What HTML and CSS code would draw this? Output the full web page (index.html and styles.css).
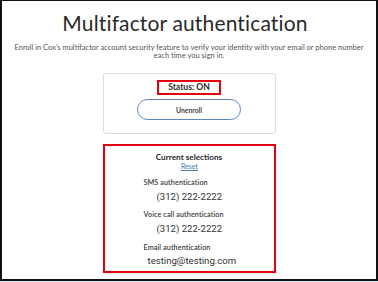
FILE: index.html
```html
<!DOCTYPE html>
<html>
<head>
<meta charset="utf-8">
<link rel="stylesheet" href="styles.css">
</head>
<body>
<div class="frame">
  <h1 class="title">Multifactor authentication</h1>
  <p class="intro">Enroll in Cox's multifactor account security feature to verify your identity with your email or phone number<br>each time you sign in.</p>
  <div class="card status-card">
    <div class="status">Status: ON</div>
    <button class="btn">Unenroll</button>
  </div>
  <div class="card selections">
    <div class="sel-title">Current selections</div>
    <a class="reset" href="#">Reset</a>
    <div class="group">
      <div class="label">SMS authentication</div>
      <div class="value phone">(312) 222-2222</div>
    </div>
    <div class="group">
      <div class="label">Voice call authentication</div>
      <div class="value phone">(312) 222-2222</div>
    </div>
    <div class="group last">
      <div class="label">Email authentication</div>
      <div class="value email">testing@testing.com</div>
    </div>
  </div>
</div>
</body>
</html>
```
FILE: styles.css
```css
html, body {
  margin: 0;
  padding: 0;
  background: #ffffff;
}
body {
  width: 378px;
  height: 282px;
  overflow: hidden;
  font-family: Lato, "Open Sans", sans-serif;
  color: #333;
}
.frame {
  box-sizing: border-box;
  width: 378px;
  height: 281px;
  border-top: 1px solid #111;
  border-left: 2px solid #111;
  border-right: 2px solid #111;
  border-bottom: 2px solid #111;
  box-shadow: 0 1px 0 #d4ecec;
  display: flex;
  flex-direction: column;
  align-items: center;
  padding-top: 9px;
}
.title {
  margin: 0 8px 0 0;
  font-weight: 400;
  font-size: 21px;
  line-height: 25px;
  color: #2a2a2a;
  letter-spacing: 0.15px;
}
.intro {
  margin: 9px 0 0;
  font-size: 7.5px;
  line-height: 7.5px;
  color: #555;
  text-align: center;
}
.card {
  box-sizing: border-box;
  width: 173px;
  background: #fff;
}
.status-card {
  margin-top: 14px;
  height: 61px;
  border: 1px solid #dcdcdc;
  border-radius: 3px;
  display: flex;
  flex-direction: column;
  align-items: center;
  padding-top: 6px;
}
.status {
  box-sizing: border-box;
  width: 64px;
  height: 15px;
  border: 2px solid #e3000f;
  font-weight: 700;
  font-size: 8.6px;
  line-height: 11px;
  text-align: center;
  color: #2a2a2a;
}
.btn {
  margin-top: 4px;
  box-sizing: border-box;
  width: 104px;
  height: 21px;
  border: 1px solid #5a86bd;
  border-radius: 11px;
  background: #fff;
  font-family: Lato, sans-serif;
  font-weight: 700;
  font-size: 6.8px;
  color: #444;
  padding: 0;
}
.selections {
  margin-top: 10px;
  height: 129px;
  border: 2px solid #e3000f;
  box-shadow: 0 2px 2px rgba(0,0,0,0.08);
  display: flex;
  flex-direction: column;
  padding: 6px 0 0 39px;
}
.sel-title {
  margin-left: -39px;
  text-align: center;
  font-weight: 700;
  font-size: 8.2px;
  line-height: 10px;
  color: #2a2a2a;
}
.reset {
  align-self: center;
  position: relative;
  left: -19px;
  font-size: 7px;
  line-height: 9px;
  color: #4a78b5;
}
.group {
  margin-top: 7px;
}
.group.last {
  margin-top: 8px;
}
.label {
  font-size: 7.2px;
  line-height: 9px;
  font-weight: 600;
  color: #3a3a3a;
  letter-spacing: 0.1px;
}
.value {
  font-family: Roboto, "Liberation Sans", sans-serif;
  font-size: 9.6px;
  line-height: 12px;
  color: #333;
  margin-top: 4px;
}
.phone {
  margin-left: 13px;
}
.email {
  margin-left: 4px;
  margin-top: 3px;
}
```
